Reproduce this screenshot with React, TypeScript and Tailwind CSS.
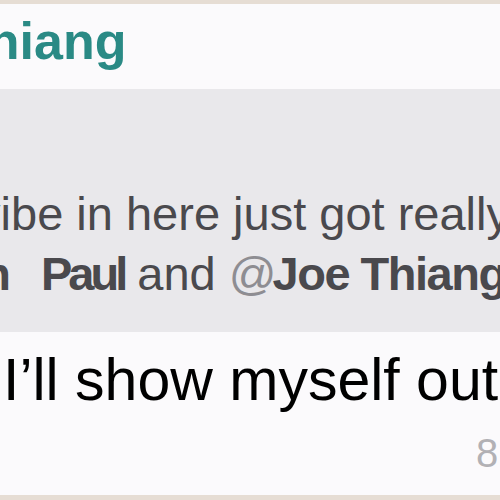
import React from 'react';

export default function App() {
  return (
    <div className="w-[500px] h-[500px] overflow-hidden bg-[#e6ddd4] pt-[4px] font-['Liberation_Sans',Arial,sans-serif]">
      {/* message bubble */}
      <div className="h-[491px] bg-[#fbfafc] flex flex-col whitespace-nowrap">
        {/* sender */}
        <div className="mt-[11px] ml-[-148px] text-[52px] leading-[52px] font-bold text-[#2a8a85]">
          Joe Thiang
        </div>

        {/* quoted message */}
        <div className="mt-[22px] h-[243px] bg-[#e9e8eb] pt-[95px] text-[47px] leading-[60px] text-[#4a494d]">
          <div className="ml-[-117px]">The vibe in here just got really awkward</div>
          <div className="ml-[-145px]">
            <span className="text-[#8e8d92] tracking-[-4px]">@</span>
            <b className="font-bold">John</b>
            <b className="ml-[30px] tracking-[-4px]">Paul</b> and{' '}
            <span className="text-[#8e8d92] tracking-[-4px]">@</span>
            <b className="tracking-[-1.5px]">Joe Thiang</b>
          </div>
        </div>

        {/* message text */}
        <div className="mt-[13px] ml-[3px] text-[59px] leading-[70px] text-black">
          I’ll show myself out
        </div>

        {/* time */}
        <div className="mt-[18px] ml-[476px] text-[40px] leading-[40px] text-[#b2b1b5]">
          8:43 PM
        </div>
      </div>
    </div>
  );
}
